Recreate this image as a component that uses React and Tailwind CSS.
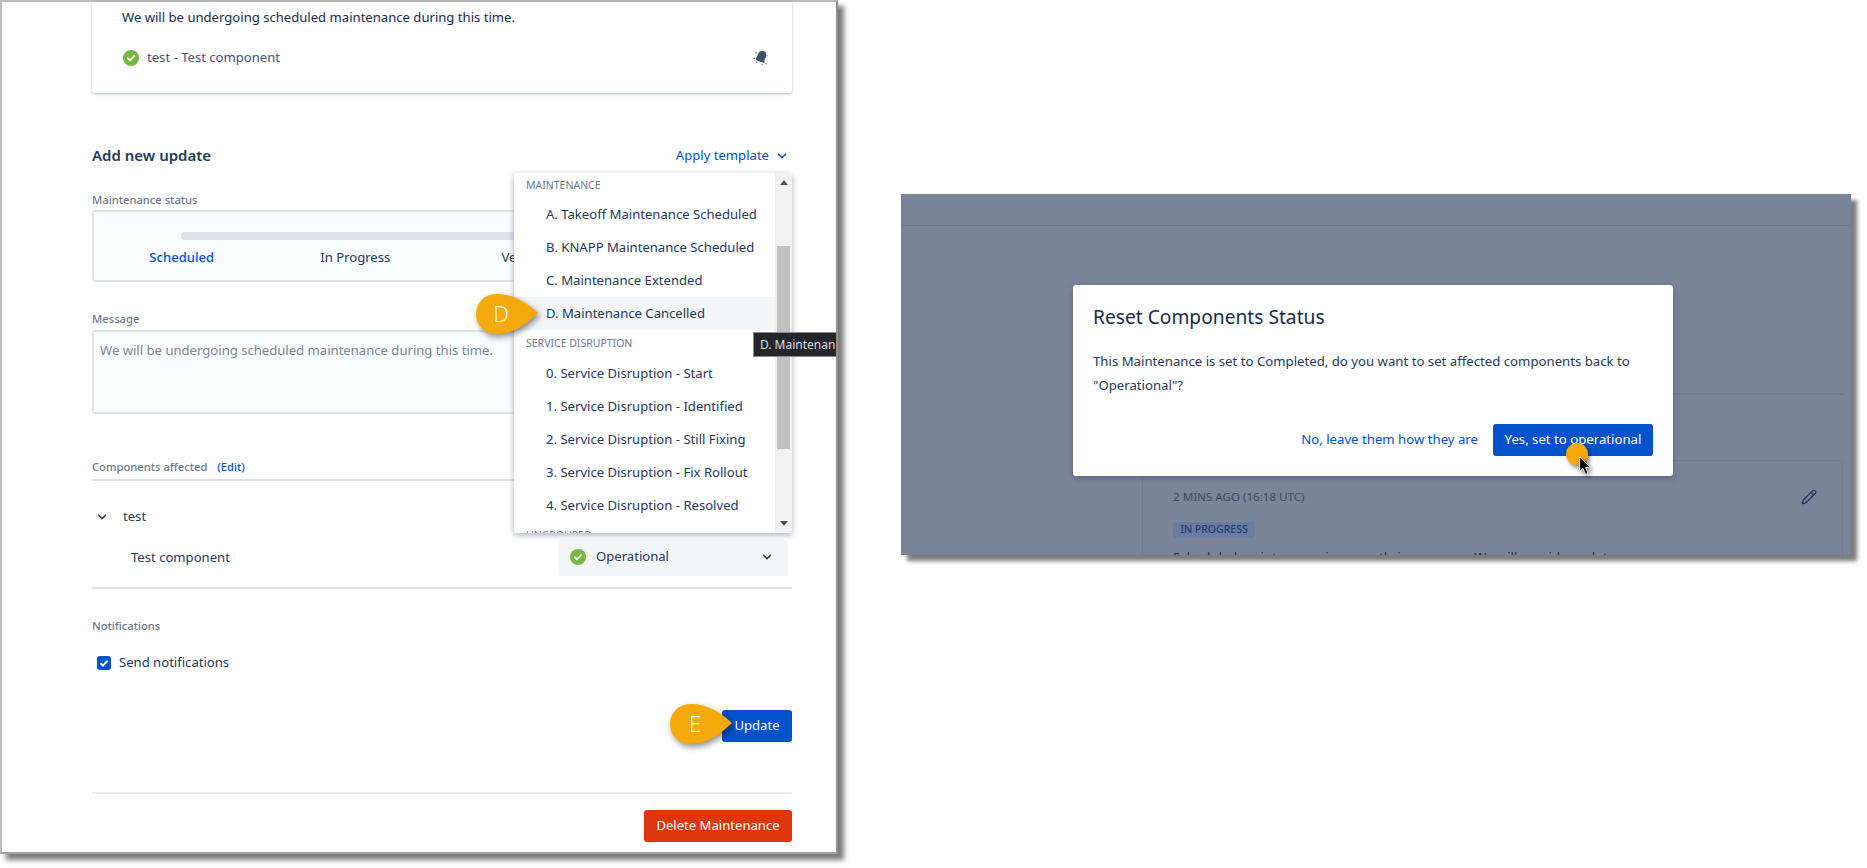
import React from "react";
import { ChevronDown, Pencil } from "lucide-react";

function GreenCheck({ className }) {
  return (
    <svg viewBox="0 0 16 16" className={className}>
      <circle cx="8" cy="8" r="8" fill="#75b843" />
      <path d="M4.8 8.2 7 10.3 11.2 5.9" fill="none" stroke="#fff" strokeWidth="1.8" strokeLinecap="round" strokeLinejoin="round" />
    </svg>
  );
}

function Callout({ letter, className }) {
  return (
    <div className={className}>
      <svg viewBox="0 0 62 40" className="absolute inset-0 h-full w-full overflow-visible drop-shadow-[2px_3px_3px_rgba(0,0,0,0.45)]">
        <path d="M62 19 C50 8 38 0 20 0 A20 20 0 0 0 20 40 C38 40 50 30 62 19 Z" fill="#f6a90a" />
      </svg>
      <span className="absolute left-0 top-0 flex h-[38px] w-[50px] items-center justify-center text-[22px] font-light text-white">{letter}</span>
    </div>
  );
}

function MenuRow({ children, active }) {
  return (
    <div className={`flex h-[33px] items-center pl-[32px] text-[13.1px] text-[#253858] ${active ? "bg-[#f4f5f7]" : ""}`}>{children}</div>
  );
}

function MenuHead({ children, tall }) {
  return <div className={`flex items-center pl-[12px] text-[10.5px] text-[#6b778c] ${tall ? "h-[27px]" : "h-[25px]"}`}>{children}</div>;
}

function LeftPanel() {
  return (
    <div className="relative h-[854px] w-[838px] shrink-0 border-2 border-[#bdbdbd] border-r-[#8f8f8f] border-b-[#a2a2a2] bg-white pl-[90px] text-[13.1px] text-[#253858] shadow-[6px_6px_5px_rgba(80,80,80,0.75)]">
      <div className="flex h-[91px] w-[700px] flex-col rounded-b-[3px] bg-white pl-[30px] pr-[28px] shadow-[0_1px_3px_rgba(9,30,66,0.3)]">
        <div className="mt-[6px] flex h-[20px] items-center text-[#172b4d]">We will be undergoing scheduled maintenance during this time.</div>
        <div className="mt-[20px] flex h-[20px] items-center justify-between">
          <div className="flex items-center gap-[8px]">
            <GreenCheck className="ml-[1px] h-[16px] w-[16px]" />
            <span className="text-[#42526e]">test - Test component</span>
          </div>
          <svg viewBox="0 0 18 18" className="-mr-[5px] h-[18px] w-[18px]">
            <path d="M8 3 C10 1.5 14 1.8 15 4 C16 6.5 15 9 13.5 11 L13.5 14 L10 13 C8 12.5 6 11.5 4.5 10 C6 8 7 5 8 3 Z" fill="#42526e" />
            <path d="M4.5 3.4 l1 1 M2.6 9.4 h1.3 M5 13.6 l1 -1 M11.4 16.2 l-.5 -1 M15.6 15 l-1 -.6 M16.8 6.8 l-.6 .2" stroke="#42526e" strokeWidth="1.2" fill="none" />
          </svg>
        </div>
      </div>

      <div className="w-[700px]">
        <div className="mt-[53px] flex h-[20px] items-center justify-between">
          <span className="-mt-[2px] text-[15px] font-semibold text-[#253858]">Add new update</span>
          <div className="flex items-center gap-[6px] pr-[3px] text-[#0052cc]">
            Apply template
            <ChevronDown className="h-[14px] w-[14px]" strokeWidth={2.6} />
          </div>
        </div>

        <div className="mt-[25px] text-[11.2px] font-medium leading-[18px] text-[#6b778c]">Maintenance status</div>
        <div className="mt-[1px] h-[72px] rounded-[3px] border-2 border-[#dfe1e6] bg-[#fafbfc] px-[1px]">
          <div className="mx-[86px] mt-[20px] h-[8px] rounded-full bg-[#dfe1e6]" />
          <div className="mt-[8px] grid grid-cols-4 text-center">
            <span className="font-medium text-[#0052cc]">Scheduled</span>
            <span>In Progress</span>
            <span>Verifying</span>
            <span>Completed</span>
          </div>
        </div>

        <div className="mt-[28px] text-[11.2px] font-medium leading-[18px] text-[#6b778c]">Message</div>
        <div className="mt-[2px] h-[84px] rounded-[3px] border-2 border-[#dfe1e6] bg-[#fafbfc] px-[6px] py-[9px] text-[#7a869a]">
          We will be undergoing scheduled maintenance during this time.
        </div>

        <div className="mt-[46px] flex h-[21px] items-center gap-[10px] border-b-2 border-[#dfe1e6] pb-[4px] text-[11.2px] font-medium text-[#6b778c]">
          <span>Components affected</span>
          <span className="text-[#0052cc]">(Edit)</span>
        </div>
        <div className="mt-[26px] flex h-[20px] items-center text-[#253858]">
          <ChevronDown className="ml-[3px] mr-[14px] h-[14px] w-[14px]" strokeWidth={2.6} />
          test
        </div>
        <div className="mt-[13px] flex h-[36px] items-center justify-between pr-[4px]">
          <span className="ml-[39px]">Test component</span>
          <div className="flex h-[36px] w-[230px] items-center rounded-[3px] bg-[#f4f5f7] pb-[3px] pl-[12px] pr-[14px]">
            <GreenCheck className="h-[16px] w-[16px]" />
            <span className="ml-[10px] flex-1">Operational</span>
            <ChevronDown className="h-[14px] w-[14px]" strokeWidth={2.8} />
          </div>
        </div>
        <div className="mt-[11px] h-[2px] bg-[#dfe1e6]" />

        <div className="mt-[28px] text-[11.2px] font-medium leading-[18px] text-[#6b778c]">Notifications</div>
        <div className="mt-[18px] flex h-[20px] items-center gap-[8px] pl-[5px]">
          <span className="flex h-[14px] w-[14px] items-center justify-center rounded-[3px] bg-[#0052cc]">
            <svg viewBox="0 0 14 14" className="h-[14px] w-[14px]">
              <path d="M3.4 7.2 6 9.6 10.6 4.6" fill="none" stroke="#fff" strokeWidth="2" />
            </svg>
          </span>
          <span>Send notifications</span>
        </div>

        <div className="mt-[37px] flex justify-end">
          <div className="flex h-[32px] w-[70px] items-center justify-center rounded-[3px] bg-[#0052cc] text-white">Update</div>
        </div>
        <div className="mt-[50px] h-[2px] bg-[#ebecf0]" />
        <div className="mt-[16px] flex justify-end">
          <div className="flex h-[32px] w-[148px] items-center justify-center rounded-[3px] bg-[#de350b] text-white">Delete Maintenance</div>
        </div>
      </div>

      <div className="absolute left-[512px] top-[171px] h-[360px] w-[278px] overflow-hidden rounded-[3px] bg-white shadow-[0_2px_6px_rgba(9,30,66,0.35)]">
        <MenuHead>MAINTENANCE</MenuHead>
        <MenuRow>A. Takeoff Maintenance Scheduled</MenuRow>
        <MenuRow>B. KNAPP Maintenance Scheduled</MenuRow>
        <MenuRow>C. Maintenance Extended</MenuRow>
        <MenuRow active>D. Maintenance Cancelled</MenuRow>
        <MenuHead tall>SERVICE DISRUPTION</MenuHead>
        <MenuRow>0. Service Disruption - Start</MenuRow>
        <MenuRow>1. Service Disruption - Identified</MenuRow>
        <MenuRow>2. Service Disruption - Still Fixing</MenuRow>
        <MenuRow>3. Service Disruption - Fix Rollout</MenuRow>
        <MenuRow>4. Service Disruption - Resolved</MenuRow>
        <MenuHead tall>UNGROUPED</MenuHead>
        <div className="absolute inset-y-0 right-0 w-[17px] bg-[#f1f1f1]">
          <div className="absolute left-[2px] right-[2px] top-[73px] h-[203px] bg-[#c1c1c1]" />
          <div className="absolute left-[5px] top-[7px] h-0 w-0 border-x-[4px] border-b-[5px] border-x-transparent border-b-[#505050]" />
          <div className="absolute bottom-[7px] left-[5px] h-0 w-0 border-x-[4px] border-t-[5px] border-x-transparent border-t-[#505050]" />
        </div>
      </div>

      <div className="absolute left-[751px] top-[330px] flex h-[25px] w-[83px] items-center overflow-hidden whitespace-nowrap border border-[#8a8a8a] border-r-0 bg-[#25262b] pl-[6px] text-[12px] text-[#d8dbe0]">
        D. Maintenance Cancelled
      </div>

      <Callout letter="D" className="absolute left-[474px] top-[292px] h-[40px] w-[62px]" />
      <Callout letter="E" className="absolute left-[668px] top-[702px] h-[40px] w-[62px]" />
    </div>
  );
}

function RightPanel() {
  return (
    <div className="relative ml-[63px] mt-[194px] h-[361px] w-[950px] shrink-0 bg-[#7a8599] text-[13.2px] shadow-[6px_6px_4px_rgba(80,80,80,0.75)]">
      <div className="h-[32px] border-b border-[#707b8f]" />
      <div className="ml-[241px] mr-[8px] mt-[167px] h-[2px] bg-[#737e92]" />

      <div className="absolute bottom-0 left-[241px] right-[8px] top-[266px] overflow-hidden rounded-t-[3px] border-x border-t border-[#727d91] px-[30px] pt-[27px] text-[#253858]">
        <div className="flex h-[18px] items-center justify-between text-[11.6px] text-[#3d4a63]">
          <span>2 MINS AGO (16:18 UTC)</span>
          <Pencil className="-mr-[5px] h-[16px] w-[16px] text-[#253858]" />
        </div>
        <div className="mt-[16px] flex h-[16px] w-[82px] items-center justify-center rounded-[3px] bg-[#6a7ca0] text-[10.5px] font-medium text-[#1f3c78]">IN PROGRESS</div>
        <div className="mt-[10px] h-[16px] whitespace-nowrap text-[#1f2a40]">Scheduled maintenance is currently in progress. We will provide updates as necessary.</div>
      </div>

      <div className="absolute left-[172px] top-[91px] h-[191px] w-[600px] rounded-[3px] bg-white px-[20px] shadow-[0_2px_6px_rgba(9,30,66,0.3)]">
        <div className="mt-[20px] text-[19.2px] font-normal leading-[24px] text-[#172b4d]">Reset Components Status</div>
        <div className="mt-[20px] leading-[24px] text-[#253858]">
          This Maintenance is set to Completed, do you want to set affected components back to
          <br />"Operational"?
        </div>
        <div className="absolute bottom-[20px] right-[20px] flex items-center gap-[15px]">
          <span className="text-[#0052cc]">No, leave them how they are</span>
          <div className="flex h-[32px] w-[160px] items-center justify-center rounded-[3px] bg-[#0052cc] text-white">Yes, set to operational</div>
        </div>
      </div>

      <div className="absolute left-[665px] top-[249px] h-[22px] w-[22px] rounded-full bg-[#f6a90a] shadow-[2px_3px_4px_rgba(0,0,0,0.45)]" />
      <svg viewBox="0 0 12 20" className="absolute left-[678px] top-[262px] h-[20px] w-[12px] drop-shadow-[2px_2px_2px_rgba(0,0,0,0.5)]">
        <path d="M0.5 0.5 V15.5 L4 12.4 L6.6 18.5 L9 17.4 L6.6 11.6 L11 11.2 Z" fill="#000" stroke="#fff" strokeWidth="0.8" />
      </svg>
    </div>
  );
}

export default function App() {
  return (
    <div className="flex h-[868px] w-[1867px] items-start overflow-hidden bg-white font-['Noto_Sans',sans-serif]">
      <LeftPanel />
      <RightPanel />
    </div>
  );
}
